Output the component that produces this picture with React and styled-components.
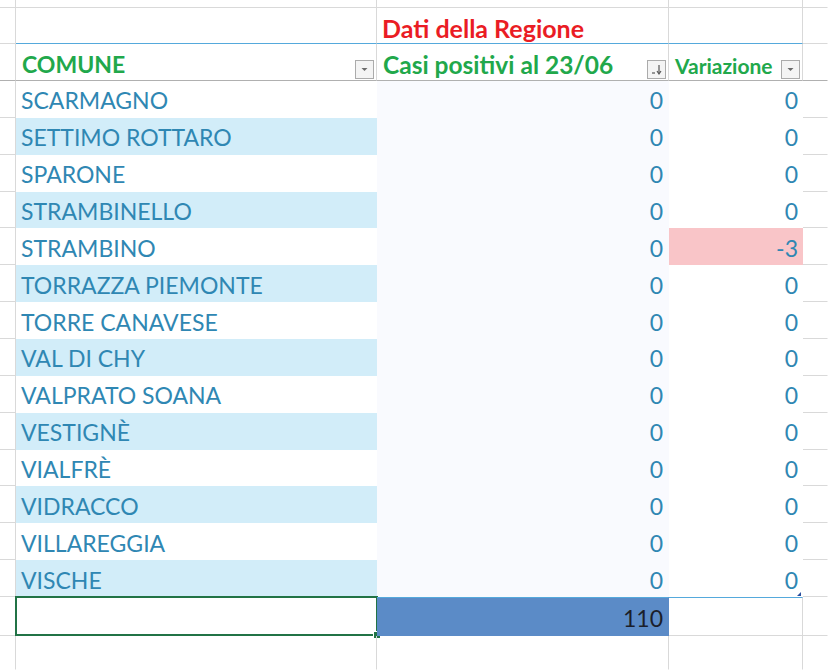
import React from 'react';
import styled, { createGlobalStyle } from 'styled-components';

const GRID = '#d9d9d9';
const BLUE_LINE = '#55a9dc';
const HEAD_LINE = '#b0b0b0';
const TEXT = '#2f87b3';

const Global = createGlobalStyle`
  html, body { margin: 0; padding: 0; background: #fff; }
  body { font-family: Lato, "Open Sans", sans-serif; }
`;

const Sheet = styled.div`
  width: 828px;
  height: 670px;
  overflow: hidden;
  display: grid;
  grid-template-columns: 16px 361px 292px 134px 1fr;
  grid-template-rows: 8px 36px 37px repeat(14, 36.86px) 39px 1fr;
  background: #fff;
`;

const Cell = styled.div`
  box-sizing: border-box;
  position: relative;
  display: flex;
  align-items: center;
  justify-content: ${p => (p.$right ? 'flex-end' : 'flex-start')};
  padding: ${p => (p.$right ? '3px 5px 0 0' : '3px 0 0 5px')};
  background: ${p => p.$bg || 'transparent'};
  border-right: 1px solid ${p => p.$r || 'transparent'};
  border-bottom: 1px solid ${p => p.$b || 'transparent'};
  border-top: ${p => (p.$t ? `1px solid ${p.$t}` : 'none')};
  color: ${TEXT};
  font-size: 23px;
  white-space: nowrap;
`;

const Title = styled.span`
  font-weight: 700;
  font-size: ${p => p.$size || 23}px;
  color: ${p => p.$color};
  padding-top: ${p => p.$pt || 0}px;
`;

const HeadCell = styled(Cell)`
  justify-content: space-between;
  padding: 0 2px 0 6px;
`;

const FilterBtn = styled.div`
  align-self: flex-end;
  margin-bottom: 1px;
  width: 19px;
  height: 19px;
  box-sizing: border-box;
  border: 1px solid #ababab;
  background: #f4f4f4;
  display: flex;
  align-items: center;
  justify-content: center;
`;

const TotalSel = styled(Cell)`
  border: none;
  box-shadow: inset 0 0 0 2px #217346;
  margin: -1px -1px 0 -1px;
`;

const Handle = styled.span`
  position: absolute;
  right: -3px;
  bottom: -3px;
  width: 6px;
  height: 6px;
  background: #217346;
  border: 1px solid #fff;
`;

const Corner = styled.span`
  position: absolute;
  right: 1px;
  bottom: 0;
  width: 0;
  height: 0;
  border-left: 4px solid transparent;
  border-bottom: 4px solid #2b4f9e;
`;

const Total = styled.span`
  color: #1b1f2b;
  font-size: 23px;
`;

const DropIcon = () => (
  <svg width="9" height="5" viewBox="0 0 9 5">
    <path d="M1.5 1 L7.5 1 L4.5 4 Z" fill="#6b6b6b" />
  </svg>
);

const SortIcon = () => (
  <svg width="13" height="13" viewBox="0 0 13 13">
    <path d="M2 10 H5" stroke="#555" strokeWidth="1.2" />
    <path d="M9 2 V10" stroke="#555" strokeWidth="1.2" />
    <path d="M7 8 L9 11 L11 8" stroke="#555" strokeWidth="1.2" fill="none" />
  </svg>
);

const data = [
  ['SCARMAGNO', 0, 0],
  ['SETTIMO ROTTARO', 0, 0],
  ['SPARONE', 0, 0],
  ['STRAMBINELLO', 0, 0],
  ['STRAMBINO', 0, -3],
  ['TORRAZZA PIEMONTE', 0, 0],
  ['TORRE CANAVESE', 0, 0],
  ['VAL DI CHY', 0, 0],
  ['VALPRATO SOANA', 0, 0],
  ['VESTIGNÈ', 0, 0],
  ['VIALFRÈ', 0, 0],
  ['VIDRACCO', 0, 0],
  ['VILLAREGGIA', 0, 0],
  ['VISCHE', 0, 0],
];

export default function App() {
  return (
    <>
      <Global />
      <Sheet>
        {/* top partial row */}
        <Cell $r={GRID} $b={GRID} />
        <Cell $r={GRID} $b={GRID} />
        <Cell $r={GRID} $b={GRID} />
        <Cell $r={GRID} $b={GRID} />
        <Cell $b={GRID} />

        {/* group title row */}
        <Cell $r={GRID} $b={GRID} />
        <Cell $r={GRID} $b={BLUE_LINE} />
        <Cell $r={GRID} $b={BLUE_LINE}>
          <Title $color="#ea1c24" $size={25} $pt={2}>Dati della Regione</Title>
        </Cell>
        <Cell $r={GRID} $b={BLUE_LINE} />
        <Cell $b={GRID} />

        {/* header row */}
        <Cell $r={GRID} $b={HEAD_LINE} />
        <HeadCell $r={GRID} $b={HEAD_LINE}>
          <Title $color="#21a84b" $pt={4}>COMUNE</Title>
          <FilterBtn><DropIcon /></FilterBtn>
        </HeadCell>
        <HeadCell $r={GRID} $b={HEAD_LINE}>
          <Title $color="#21a84b" $size={24.5} $pt={4}>Casi positivi al 23/06</Title>
          <FilterBtn><SortIcon /></FilterBtn>
        </HeadCell>
        <HeadCell $r={GRID} $b={HEAD_LINE}>
          <Title $color="#21a84b" $size={21} $pt={6}>Variazione</Title>
          <FilterBtn><DropIcon /></FilterBtn>
        </HeadCell>
        <Cell $b={HEAD_LINE} />

        {data.map(([name, cases, diff], i) => (
          <React.Fragment key={name}>
            <Cell $r={GRID} $b={GRID} />
            <Cell $bg={i % 2 ? '#d2edf9' : '#fff'}>{name}</Cell>
            <Cell $right $bg="#f9fafe">{cases}</Cell>
            <Cell $right $bg={diff < 0 ? '#f9c5c8' : '#fff'} style={{ paddingRight: 4 }}>
              {diff}
              {i === data.length - 1 && <Corner />}
            </Cell>
            <Cell $b={GRID} />
          </React.Fragment>
        ))}

        {/* total row */}
        <Cell $r={GRID} $b={GRID} />
        <TotalSel>
          <Handle />
        </TotalSel>
        <Cell $right $bg="#5b8bc7" $t={BLUE_LINE}>
          <Total>110</Total>
        </Cell>
        <Cell $r={GRID} $b={GRID} $t={BLUE_LINE} />
        <Cell $b={GRID} />

        {/* trailing row */}
        <Cell $r={GRID} />
        <Cell $r={GRID} />
        <Cell $r={GRID} />
        <Cell $r={GRID} />
        <Cell />
      </Sheet>
    </>
  );
}
